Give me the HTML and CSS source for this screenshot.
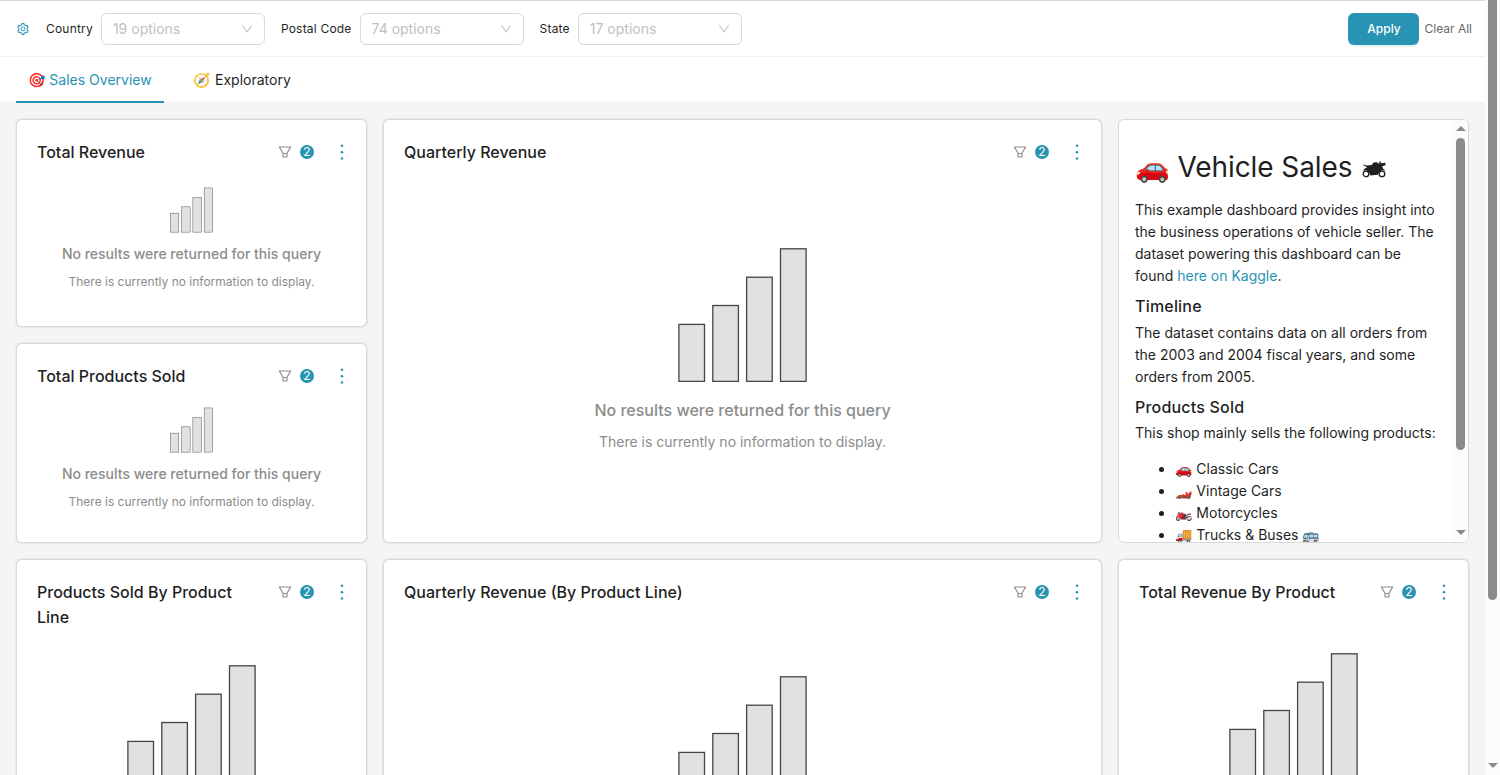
FILE: index.html
```html
<!DOCTYPE html>
<html lang="en">
<head>
  <meta charset="UTF-8">
  <meta name="viewport" content="width=device-width, initial-scale=1.0">
  <title>Sales Dashboard</title>
  <link rel="stylesheet" href="styles.css">
</head>
<body>
  <!-- shared icons -->
  <svg class="icon-defs">
    <symbol id="icon-down" viewBox="64 64 896 896">
      <path d="M884 256h-75c-5.1 0-9.9 2.5-12.9 6.6L512 654.2 227.9 262.6c-3-4.1-7.8-6.6-12.9-6.6h-75c-6.5 0-10.3 7.4-6.5 12.7l352.6 486.1c12.8 17.6 39 17.6 51.7 0l352.6-486.1c3.9-5.3.1-12.7-6.4-12.7z"/>
    </symbol>
    <symbol id="icon-filter" viewBox="64 64 896 896">
      <path d="M880.1 154H143.9c-24.5 0-39.8 26.7-27.5 48L349 597.4V838c0 17.7 14.2 32 31.8 32h262.4c17.6 0 31.8-14.3 31.8-32V597.4L907.7 202c12.2-21.3-3.1-48-27.6-48zM603.4 798H420.6V642h182.9v156zm9.6-236.6l-9.5 16.6h-183l-9.5-16.6L212.7 226h598.6L613 561.4z"/>
    </symbol>
    <symbol id="icon-setting" viewBox="64 64 896 896">
      <path d="M924.8 625.7l-65.5-56c3.1-19 4.7-38.4 4.7-57.8s-1.6-38.8-4.7-57.8l65.5-56a32.03 32.03 0 009.3-35.2l-.9-2.6a443.74 443.74 0 00-79.7-137.9l-1.8-2.1a32.12 32.12 0 00-35.1-9.5l-81.3 28.9c-30-24.6-63.5-44-99.7-57.6l-15.7-85a32.05 32.05 0 00-25.8-25.7l-2.7-.5c-52.1-9.4-106.9-9.4-159 0l-2.7.5a32.05 32.05 0 00-25.8 25.7l-15.8 85.4a351.86 351.86 0 00-99 57.4l-81.9-29.1a32 32 0 00-35.1 9.5l-1.8 2.1a446.02 446.02 0 00-79.7 137.9l-.9 2.6c-4.5 12.5-.8 26.5 9.3 35.2l66.3 56.6c-3.1 18.8-4.6 38-4.6 57.1 0 19.2 1.5 38.4 4.6 57.1L99 625.5a32.03 32.03 0 00-9.3 35.2l.9 2.6c18.1 50.4 44.9 96.9 79.7 137.9l1.8 2.1a32.12 32.12 0 0035.1 9.5l81.9-29.1c29.8 24.5 63.1 43.9 99 57.4l15.8 85.4a32.05 32.05 0 0025.8 25.7l2.7.5a449.4 449.4 0 00159 0l2.7-.5a32.05 32.05 0 0025.8-25.7l15.7-85a350 350 0 0099.7-57.6l81.3 28.9a32 32 0 0035.1-9.5l1.8-2.1c34.8-41.1 61.6-87.5 79.7-137.9l.9-2.6c4.5-12.3.8-26.3-9.3-35zM788.3 465.9c2.5 15.1 3.8 30.6 3.8 46.1s-1.3 31-3.8 46.1l-6.6 40.1 74.7 63.9a370.03 370.03 0 01-42.6 73.6L721 702.8l-31.4 25.8c-23.9 19.6-50.5 35-79.3 45.8l-38.1 14.3-17.9 97a377.5 377.5 0 01-85 0l-17.9-97.2-37.8-14.5c-28.5-10.8-55-26.2-78.7-45.7l-31.4-25.9-93.4 33.2c-17-22.9-31.2-47.6-42.6-73.6l75.5-64.5-6.5-40c-2.4-14.9-3.7-30.3-3.7-45.5 0-15.3 1.2-30.6 3.7-45.5l6.5-40-75.5-64.5c11.3-26.1 25.6-50.7 42.6-73.6l93.4 33.2 31.4-25.9c23.7-19.5 50.2-34.9 78.7-45.7l37.9-14.3 17.9-97.2c28.1-3.2 56.8-3.2 85 0l17.9 97 38.1 14.3c28.7 10.8 55.4 26.2 79.3 45.8l31.4 25.8 92.8-32.9c17 22.9 31.2 47.6 42.6 73.6L781.8 426l6.5 39.9zM512 326c-97.2 0-176 78.8-176 176s78.8 176 176 176 176-78.8 176-176-78.8-176-176-176zm79.2 255.2A111.6 111.6 0 01512 614c-29.9 0-58-11.7-79.2-32.8A111.6 111.6 0 01400 502c0-29.9 11.7-58 32.8-79.2C454 401.6 482.1 390 512 390c29.9 0 58 11.6 79.2 32.8A111.6 111.6 0 01624 502c0 29.9-11.7 58-32.8 79.2z"/>
    </symbol>
    <symbol id="icon-more" viewBox="0 0 4 16">
      <circle cx="2" cy="1.8" r="1.25"/>
      <circle cx="2" cy="8.2" r="1.25"/>
      <circle cx="2" cy="14.6" r="1.25"/>
    </symbol>
    <symbol id="icon-motorcycle" viewBox="0 0 24 17">
      <circle cx="4" cy="12.9" r="2.8" fill="none" stroke="currentColor" stroke-width="1.3"/>
      <circle cx="20" cy="12.9" r="2.8" fill="none" stroke="currentColor" stroke-width="1.3"/>
      <path d="M0 3.2L5 4.4 9.8 4 11.5 1.6 14.6 1.2 17.2 2.8 17.4 .4 18.4 .3 19 2.2 23.3 1.8 23.5 4.2 20.3 5.3 20.8 7.6 23.8 9.6 20.6 9.2 17.8 10.2 15.8 13.8 8.2 14.4 7 11.2 4.3 9.2 1 9.8 2.8 7.4 5.2 6.6z"/>
    </symbol>
    <symbol id="empty-chart" viewBox="0 0 129 134">
      <g fill="#e1e1e1" stroke="#454545" stroke-width="1.3">
        <rect x="0.9" y="76.4" width="25.6" height="57"/>
        <rect x="34.8" y="57.5" width="25.6" height="75.9"/>
        <rect x="68.6" y="29.2" width="25.6" height="104.2"/>
        <rect x="102.5" y="0.8" width="25.6" height="132.6"/>
      </g>
    </symbol>
  </svg>

  <div class="app">
    <main class="dashboard">
      <div class="filter-bar">
        <svg class="icon icon-setting"><use href="#icon-setting"/></svg>
        <div class="filter">
          <span class="filter-label">Country</span>
          <div class="select"><span>19 options</span><svg class="icon"><use href="#icon-down"/></svg></div>
        </div>
        <div class="filter">
          <span class="filter-label">Postal Code</span>
          <div class="select"><span>74 options</span><svg class="icon"><use href="#icon-down"/></svg></div>
        </div>
        <div class="filter">
          <span class="filter-label">State</span>
          <div class="select"><span>17 options</span><svg class="icon"><use href="#icon-down"/></svg></div>
        </div>
        <div class="filter-actions">
          <button class="btn-apply">Apply</button>
          <button class="btn-clear">Clear All</button>
        </div>
      </div>

      <nav class="tabs">
        <a class="tab active">🎯 Sales Overview</a>
        <a class="tab">🧭 Exploratory</a>
      </nav>

      <div class="grid">
        <section class="card total-revenue">
          <header class="card-header">
            <h2>Total Revenue</h2>
            <svg class="icon icon-filter"><use href="#icon-filter"/></svg>
            <span class="badge">2</span>
            <svg class="icon-more"><use href="#icon-more"/></svg>
          </header>
          <div class="empty small">
            <svg class="empty-image"><use href="#empty-chart"/></svg>
            <p class="empty-title">No results were returned for this query</p>
            <p class="empty-text">There is currently no information to display.</p>
          </div>
        </section>

        <section class="card total-products">
          <header class="card-header">
            <h2>Total Products Sold</h2>
            <svg class="icon icon-filter"><use href="#icon-filter"/></svg>
            <span class="badge">2</span>
            <svg class="icon-more"><use href="#icon-more"/></svg>
          </header>
          <div class="empty small">
            <svg class="empty-image"><use href="#empty-chart"/></svg>
            <p class="empty-title">No results were returned for this query</p>
            <p class="empty-text">There is currently no information to display.</p>
          </div>
        </section>

        <section class="card quarterly">
          <header class="card-header">
            <h2>Quarterly Revenue</h2>
            <svg class="icon icon-filter"><use href="#icon-filter"/></svg>
            <span class="badge">2</span>
            <svg class="icon-more"><use href="#icon-more"/></svg>
          </header>
          <div class="empty">
            <svg class="empty-image"><use href="#empty-chart"/></svg>
            <p class="empty-title">No results were returned for this query</p>
            <p class="empty-text">There is currently no information to display.</p>
          </div>
        </section>

        <section class="markdown">
          <div class="markdown-body">
            <h1>🚗 Vehicle Sales <svg class="icon-motorcycle"><use href="#icon-motorcycle"/></svg></h1>
            <p>This example dashboard provides insight into the business operations of vehicle seller. The dataset powering this dashboard can be found <a>here on Kaggle</a>.</p>
            <h3>Timeline</h3>
            <p>The dataset contains data on all orders from the 2003 and 2004 fiscal years, and some orders from 2005.</p>
            <h3>Products Sold</h3>
            <p>This shop mainly sells the following products:</p>
            <ul>
              <li>🚗 Classic Cars</li>
              <li>🏎️ Vintage Cars</li>
              <li>🏍️ Motorcycles</li>
              <li>🚚 Trucks &amp; Buses 🚌</li>
            </ul>
          </div>
          <div class="scrollbar">
            <i class="arrow-up"></i>
            <i class="thumb"></i>
            <i class="arrow-down"></i>
          </div>
        </section>

        <section class="card product-line">
          <header class="card-header">
            <h2>Products Sold By Product Line</h2>
            <svg class="icon icon-filter"><use href="#icon-filter"/></svg>
            <span class="badge">2</span>
            <svg class="icon-more"><use href="#icon-more"/></svg>
          </header>
          <div class="empty">
            <svg class="empty-image"><use href="#empty-chart"/></svg>
          </div>
        </section>

        <section class="card quarterly-line">
          <header class="card-header">
            <h2>Quarterly Revenue (By Product Line)</h2>
            <svg class="icon icon-filter"><use href="#icon-filter"/></svg>
            <span class="badge">2</span>
            <svg class="icon-more"><use href="#icon-more"/></svg>
          </header>
          <div class="empty">
            <svg class="empty-image"><use href="#empty-chart"/></svg>
          </div>
        </section>

        <section class="card revenue-product">
          <header class="card-header">
            <h2>Total Revenue By Product</h2>
            <svg class="icon icon-filter"><use href="#icon-filter"/></svg>
            <span class="badge">2</span>
            <svg class="icon-more"><use href="#icon-more"/></svg>
          </header>
          <div class="empty">
            <svg class="empty-image"><use href="#empty-chart"/></svg>
          </div>
        </section>
      </div>
    </main>

    <div class="scrollbar page-scrollbar">
      <i class="thumb"></i>
      <i class="arrow-down"></i>
    </div>
  </div>
</body>
</html>
```
FILE: styles.css
```css
* {
  box-sizing: border-box;
}
body {
  margin: 0;
  font-family: Inter, "Noto Color Emoji", Helvetica, Arial, sans-serif;
  font-size: 14px;
  line-height: 22px;
  color: #1f1f1f;
  background-color: #f5f5f5;
  overflow: hidden;
}
h1, h2, h3, p, ul {
  margin: 0;
}
.icon-defs {
  display: none;
}
.icon {
  width: 12px;
  height: 12px;
  fill: currentColor;
  flex: none;
}
.app {
  display: flex;
  height: 775px;
  overflow: hidden;
}
.dashboard {
  width: 1485px;
  flex: none;
}

/* filter bar */
.filter-bar {
  display: flex;
  align-items: center;
  gap: 16px;
  height: 57px;
  padding: 0 13px 0 17px;
  background-color: #fff;
  border-top: 1px solid #d9d9d9;
  border-bottom: 1px solid #f0f0f0;
}
.icon-setting {
  margin-right: 1px;
  color: #2893b3;
}
.filter {
  display: flex;
  align-items: center;
  gap: 8px;
}
.filter-label {
  font-size: 12px;
  letter-spacing: 0.2px;
}
.select {
  display: flex;
  align-items: center;
  justify-content: space-between;
  width: 164px;
  height: 32px;
  padding: 0 11px;
  border: 1px solid #d9d9d9;
  border-radius: 6px;
  color: #bfbfbf;
}
.filter-actions {
  display: flex;
  align-items: center;
  gap: 5px;
  margin-left: auto;
}
button {
  font-family: inherit;
  font-size: 12px;
  border: none;
  padding: 0;
  background: none;
}
.btn-apply {
  width: 71px;
  height: 32px;
  border-radius: 6px;
  background-color: #2893b3;
  color: #fff;
  font-weight: 500;
  box-shadow: 0 2px 0 #e6f4f7;
}
.btn-clear {
  color: #666;
}

/* tabs */
.tabs {
  display: flex;
  gap: 18px;
  height: 46px;
  padding-left: 16px;
  background-color: #fff;
  border-bottom: 1px solid #f0f0f0;
}
.tab {
  height: 46px;
  padding: 12px 12px 10px;
  border-bottom: 2px solid transparent;
}
.tab.active {
  color: #2893b3;
  border-bottom-color: #2893b3;
}

/* dashboard grid */
.grid {
  display: grid;
  grid-template-columns: 351px 719px 351px;
  grid-template-rows: 208px 200px 400px;
  grid-template-areas:
    "a b c"
    "d b c"
    "e f g";
  gap: 16px;
  padding: 16px;
}
.total-revenue { grid-area: a; }
.quarterly { grid-area: b; }
.markdown { grid-area: c; }
.total-products { grid-area: d; }
.product-line { grid-area: e; }
.quarterly-line { grid-area: f; }
.revenue-product { grid-area: g; }
.card {
  padding: 20px;
  background-color: #fff;
  border: 1px solid #d9d9d9;
  border-radius: 6px;
  box-shadow: 0 0 2px rgba(0, 0, 0, 0.18);
}
.card-header {
  display: flex;
  align-items: flex-start;
}
.card-header h2 {
  flex: 1;
  padding-right: 30px;
  font-size: 16px;
  font-weight: 500;
  line-height: 25px;
}
.icon-filter {
  width: 14px;
  height: 14px;
  margin-top: 5px;
  color: #8c8c8c;
}
.badge {
  width: 14px;
  height: 14px;
  margin: 5px 26px 0 8px;
  border-radius: 7px;
  background-color: #2893b3;
  color: #fff;
  font-size: 12px;
  line-height: 14px;
  text-align: center;
}
.icon-more {
  width: 4px;
  height: 16px;
  margin: 4px 2px 0 0;
  fill: #2893b3;
}

/* empty state */
.empty {
  text-align: center;
  color: #8c8c8c;
}
.empty-image {
  display: block;
  width: 129px;
  height: 134px;
  margin: 0 auto;
}
.empty-title {
  margin-top: 16px;
  font-size: 16px;
  font-weight: 500;
  line-height: 25px;
}
.empty-text {
  margin-top: 8px;
}
.empty.small .empty-image {
  width: 43px;
  height: 46px;
}
.empty.small .empty-title {
  margin-top: 10px;
  font-size: 14px;
  line-height: 22px;
}
.empty.small .empty-text {
  margin-top: 7px;
  font-size: 12px;
  line-height: 20px;
}
.total-revenue .empty { padding-top: 22px; }
.total-products .empty { padding-top: 18px; }
.quarterly .empty { padding-top: 83px; }
.product-line .empty { padding-top: 35px; }
.quarterly-line .empty { padding-top: 71px; }
.revenue-product .empty { padding-top: 48px; }

/* markdown panel */
.markdown {
  display: flex;
  height: 424px;
  overflow: hidden;
  background-color: #fff;
  border: 1px solid #d9d9d9;
  border-radius: 6px;
}
.markdown-body {
  flex: 1;
  padding: 24px 16px 0;
}
.markdown h1 {
  margin-bottom: 9px;
  font-size: 28px;
  font-weight: 400;
  line-height: 46px;
  height: 46px;
  letter-spacing: -0.1px;
}
.icon-motorcycle {
  width: 24px;
  height: 17px;
  margin-left: 2px;
  vertical-align: -1px;
  fill: currentColor;
}
.markdown h3 {
  margin: 8px 0 4px;
  font-size: 16px;
  font-weight: 500;
  line-height: 23px;
  letter-spacing: 0.2px;
}
.markdown h3 ~ h3 {
  margin-bottom: 3px;
}
.markdown a {
  color: #2893b3;
}
.markdown ul {
  margin-top: 14px;
  padding-left: 40px;
}

/* scrollbars */
.scrollbar {
  display: flex;
  flex-direction: column;
  align-items: center;
  width: 15px;
  flex: none;
  padding: 6px 0 7px;
  background-color: #fcfcfc;
}
.thumb {
  width: 9px;
  height: 312px;
  margin-top: 7px;
  border-radius: 5px;
  background-color: #8b8b8b;
}
.arrow-up, .arrow-down {
  border-left: 5px solid transparent;
  border-right: 5px solid transparent;
}
.arrow-up {
  border-bottom: 5px solid #8b8b8b;
}
.arrow-down {
  margin-top: auto;
  border-top: 5px solid #8b8b8b;
}
.page-scrollbar {
  padding-top: 0;
}
.page-scrollbar .thumb {
  height: 600px;
  margin-top: 0;
  border-radius: 0 0 5px 5px;
}
```
